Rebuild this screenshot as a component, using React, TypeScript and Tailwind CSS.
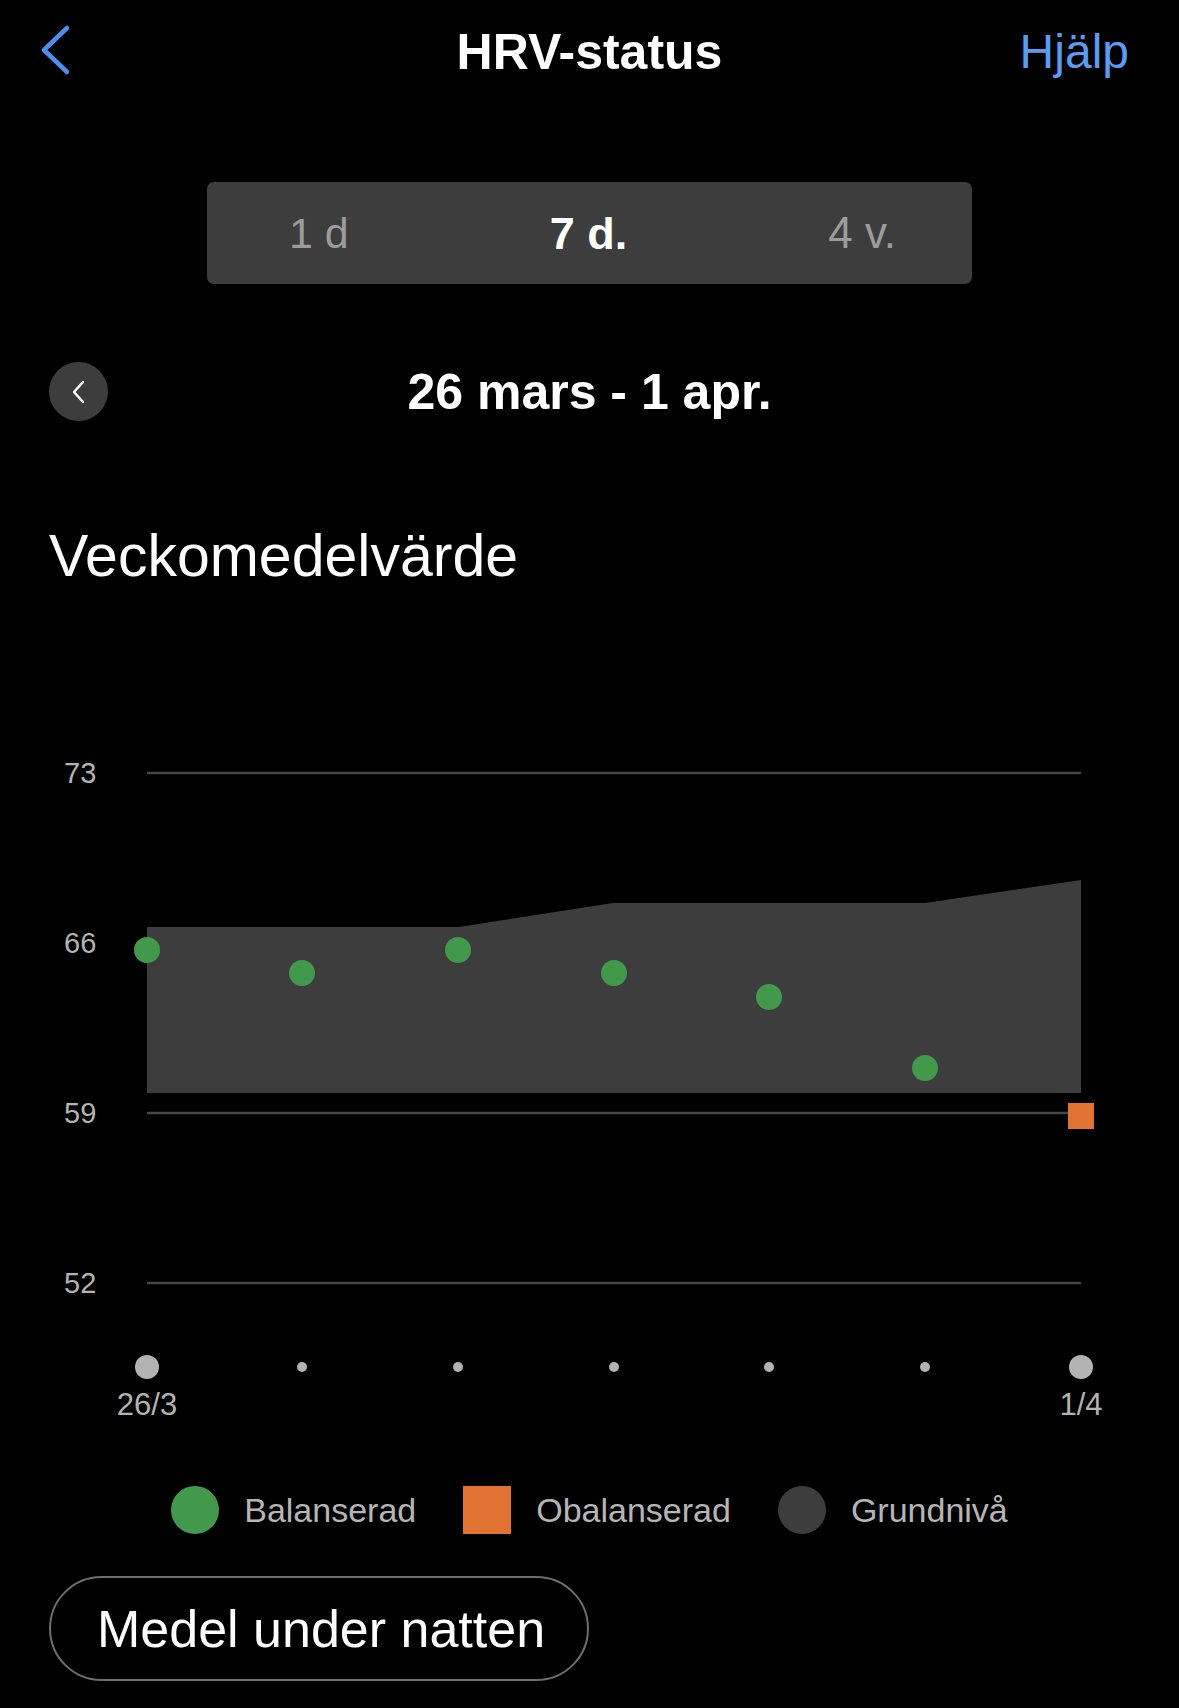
import React from "react";

const font = { fontFamily: '"Liberation Sans", Arial, sans-serif' };

// chart geometry, pixel coords inside the svg (svg top = page y 740)
const xs = [147, 302, 458, 614, 769, 925, 1081];
const points = [209, 232, 209, 232, 256, 327];
const grid = [
  { label: "73", y: 32 },
  { label: "66", y: 202 },
  { label: "59", y: 372 },
  { label: "52", y: 542 },
];

const HrvChart = () => {
  return (
    <svg width={1179} height={700} viewBox="0 0 1179 700" className="block">
      {grid.map((g) =>
        g.label !== "66" ? (
          <line key={g.label} x1={147} x2={1081} y1={g.y} y2={g.y} stroke="#464646" strokeWidth={2.5} />
        ) : null
      )}
      <polygon
        points="147,186 459,186 613,162 925,162 1081,139 1081,352 147,352"
        fill="#3d3d3d"
      />
      {grid.map((g) => (
        <text
          key={"t" + g.label}
          x={64}
          y={g.y + 10}
          fill="#b3b3b3"
          fontSize={29}
          style={font}
        >
          {g.label}
        </text>
      ))}
      {points.map((y, i) => (
        <circle key={i} cx={xs[i]} cy={y} r={13} fill="#43994b" />
      ))}
      <rect x={1068} y={362} width={26} height={26} fill="#e07232" />
      {xs.map((x, i) =>
        i === 0 || i === xs.length - 1 ? (
          <circle key={"d" + i} cx={x} cy={626} r={12} fill="#b3b3b3" />
        ) : (
          <circle key={"d" + i} cx={x} cy={626} r={5} fill="#b3b3b3" />
        )
      )}
      <text x={147} y={674} textAnchor="middle" fill="#b3b3b3" fontSize={31} style={font}>
        26/3
      </text>
      <text x={1081} y={674} textAnchor="middle" fill="#b3b3b3" fontSize={31} style={font}>
        1/4
      </text>
    </svg>
  );
};

const App = () => {
  return (
    <div
      className="w-[1179px] h-[1708px] bg-black text-white overflow-hidden"
      style={font}
    >
      {/* top bar */}
      <div className="relative h-[100px] flex items-center justify-center pt-[4px]">
        <svg width={40} height={60} viewBox="0 0 40 60" className="absolute left-[36px] top-[17px]">
          <polyline points="31,11 8,33 31,55" fill="none" stroke="#4d8fee" strokeWidth={4.5} strokeLinecap="round" strokeLinejoin="round" />
        </svg>
        <span className="text-[50px] leading-none font-bold">HRV-status</span>
        <span className="absolute right-[50px] top-[28px] text-[48px] leading-none text-[#5b9cf2]">Hjälp</span>
      </div>

      {/* period tabs */}
      <div className="mt-[82px] mx-auto w-[765px] h-[102px] rounded-[7px] bg-[#3d3d3d] flex items-center justify-between pl-[82px] pr-[76px]">
        <span className="text-[43px] leading-none text-[#9c9c9c]">1 d</span>
        <span className="text-[45px] leading-none font-bold text-white">7 d.</span>
        <span className="text-[44px] leading-none text-[#9c9c9c]">4 v.</span>
      </div>

      {/* date range */}
      <div className="relative mt-[78px] h-[59px] flex items-center justify-center">
        <button className="absolute left-[49px] top-0 w-[59px] h-[59px] rounded-full bg-[#3d3d3d] flex items-center justify-center">
          <svg width={24} height={28} viewBox="0 0 24 28">
            <polyline points="16,4 7,14 16,24" fill="none" stroke="#ffffff" strokeWidth={2.5} strokeLinecap="round" strokeLinejoin="round" />
          </svg>
        </button>
        <span className="text-[50px] leading-none font-bold">26 mars - 1 apr.</span>
      </div>

      <h1 className="mt-[106px] ml-[49px] text-[59px] leading-none font-normal">Veckomedelvärde</h1>

      <div className="mt-[155px]">
        <HrvChart />
      </div>

      {/* legend */}
      <div className="mt-[45px] h-[48px] flex items-center justify-center text-[34px] leading-none text-[#b5b5b5]">
        <span className="w-[48px] h-[48px] rounded-full bg-[#43994b]" />
        <span className="ml-[25px]">Balanserad</span>
        <span className="ml-[47px] w-[48px] h-[48px] bg-[#e07232]" />
        <span className="ml-[25px]">Obalanserad</span>
        <span className="ml-[47px] w-[48px] h-[48px] rounded-full bg-[#3d3d3d]" />
        <span className="ml-[25px]">Grundnivå</span>
      </div>

      <button className="mt-[42px] ml-[49px] w-[540px] h-[105px] rounded-full border-[2.5px] border-[#6e6e6e] flex items-center pl-[46px] text-[52px] leading-none text-white">
        Medel under natten
      </button>
    </div>
  );
};

export default App;
